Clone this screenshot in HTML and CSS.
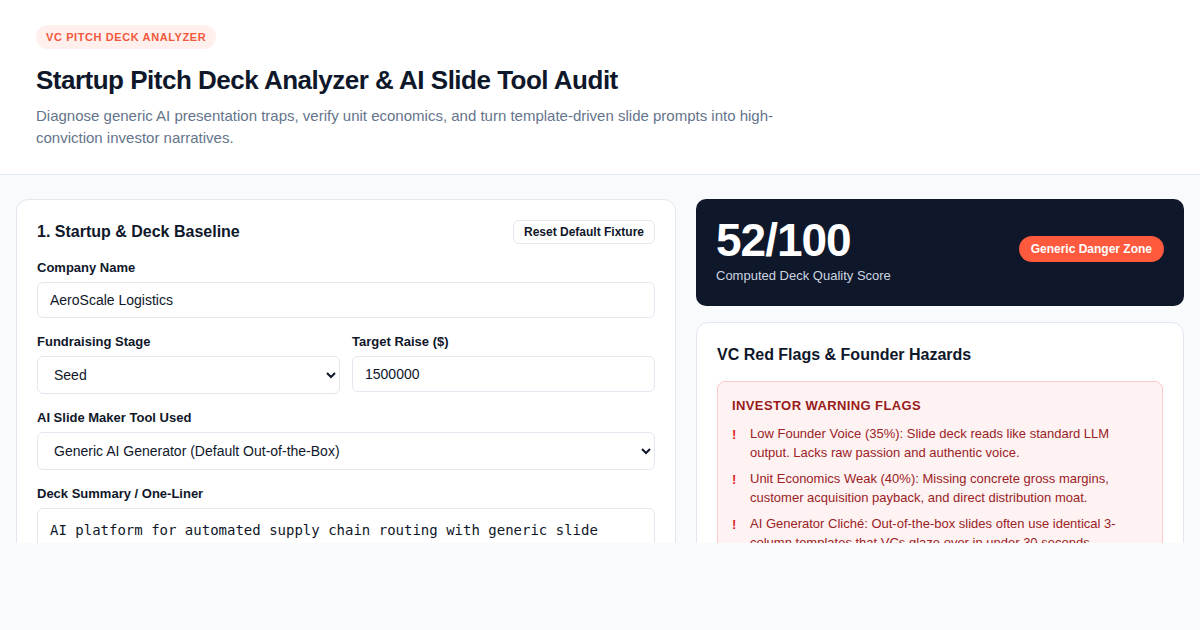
FILE: index.html
```html
<!DOCTYPE html>
<html lang="en">
<head>
    <meta charset="UTF-8">
    <meta name="viewport" content="width=device-width, initial-scale=1.0">
    <title>Startup Pitch Deck Analyzer</title>
    <link rel="stylesheet" href="styles.css">
</head>
<body>
    <!-- Page header -->
    <header class="page-header">
        <span class="eyebrow">VC Pitch Deck Analyzer</span>
        <h1>Startup Pitch Deck Analyzer &amp; AI Slide Tool Audit</h1>
        <p class="lead">Diagnose generic AI presentation traps, verify unit economics, and turn template-driven slide prompts into high-conviction investor narratives.</p>
    </header>

    <main class="workspace">
        <div class="workspace-grid">
            <!-- Baseline form -->
            <section class="card">
                <div class="card-head">
                    <h2>1. Startup &amp; Deck Baseline</h2>
                    <button class="btn-ghost" type="button">Reset Default Fixture</button>
                </div>

                <div class="field">
                    <label for="company">Company Name</label>
                    <input type="text" id="company" value="AeroScale Logistics">
                </div>

                <div class="field-row">
                    <div class="field">
                        <label for="stage">Fundraising Stage</label>
                        <select id="stage">
                            <option>Pre-Seed</option>
                            <option selected>Seed</option>
                            <option>Series A</option>
                            <option>Series B</option>
                        </select>
                    </div>
                    <div class="field">
                        <label for="raise">Target Raise ($)</label>
                        <input type="text" id="raise" value="1500000">
                    </div>
                </div>

                <div class="field">
                    <label for="tool">AI Slide Maker Tool Used</label>
                    <select id="tool">
                        <option selected>Generic AI Generator (Default Out-of-the-Box)</option>
                        <option>Custom Prompted Template</option>
                        <option>Designer-Built Deck</option>
                    </select>
                </div>

                <div class="field">
                    <label for="summary">Deck Summary / One-Liner</label>
                    <textarea id="summary" rows="4">AI platform for automated supply chain routing with generic slide templates and a standard market sizing slide.</textarea>
                </div>
            </section>

            <!-- Results column -->
            <div class="results">
                <div class="score-card">
                    <div>
                        <div class="score">52/100</div>
                        <div class="score-label">Computed Deck Quality Score</div>
                    </div>
                    <span class="pill-danger">Generic Danger Zone</span>
                </div>

                <section class="card">
                    <h2 class="card-title">VC Red Flags &amp; Founder Hazards</h2>
                    <div class="warning-box">
                        <h3>Investor Warning Flags</h3>
                        <ul class="flag-list">
                            <li><span class="bang">!</span><span>Low Founder Voice (35%): Slide deck reads like standard LLM output. Lacks raw passion and authentic voice.</span></li>
                            <li><span class="bang">!</span><span>Unit Economics Weak (40%): Missing concrete gross margins, customer acquisition payback, and direct distribution moat.</span></li>
                            <li><span class="bang">!</span><span>AI Generator Cliché: Out-of-the-box slides often use identical 3-column templates that VCs glaze over in under 30 seconds.</span></li>
                        </ul>
                    </div>
                </section>
            </div>
        </div>
    </main>
</body>
</html>
```

FILE: styles.css
```css
* {
    box-sizing: border-box;
}

body {
    margin: 0;
    font-family: "Liberation Sans", Arial, sans-serif;
    background-color: #f8fafc;
    color: #0f172a;
}

/* Header */
.page-header {
    background: #fff;
    border-bottom: 1px solid #e2e8f0;
    padding: 25px 36px 25px;
}

.eyebrow {
    display: inline-block;
    background: #fff0ed;
    color: #f2583c;
    font-size: 11px;
    font-weight: bold;
    letter-spacing: 0.6px;
    text-transform: uppercase;
    padding: 6px 10px;
    line-height: 12px;
    border-radius: 999px;
}

.page-header h1 {
    margin: 15px 0 9px;
    font-size: 26px;
    line-height: 32px;
    letter-spacing: -0.5px;
    color: #0f172a;
}

.lead {
    margin: 0;
    max-width: 760px;
    font-size: 15px;
    line-height: 22px;
    color: #64748b;
}

/* Main area */
.workspace {
    padding: 24px 16px 0;
}

.workspace-grid {
    display: grid;
    grid-template-columns: 660px 1fr;
    gap: 20px;
    height: 344px;
    overflow: hidden;
    align-items: start;
}

.card {
    background: #fff;
    border: 1px solid #e2e8f0;
    border-radius: 12px;
    padding: 20px;
}

.card-head {
    display: flex;
    justify-content: space-between;
    align-items: center;
    margin-bottom: 16px;
}

.card h2 {
    margin: 0;
    font-size: 16px;
    line-height: 24px;
    color: #0f172a;
}

.btn-ghost {
    font-family: inherit;
    font-size: 12px;
    font-weight: bold;
    color: #0f172a;
    background: #fff;
    border: 1px solid #e2e8f0;
    border-radius: 6px;
    padding: 0 10px;
    height: 24px;
    cursor: pointer;
}

/* Form fields */
.field {
    display: flex;
    flex-direction: column;
    margin-bottom: 16px;
}

.field label {
    font-size: 13px;
    font-weight: bold;
    line-height: 16px;
    margin-bottom: 6px;
    color: #0f172a;
}

.field input,
.field select,
.field textarea {
    font-family: inherit;
    font-size: 14px;
    color: #0f172a;
    background: #fff;
    border: 1px solid #e2e8f0;
    border-radius: 6px;
    padding: 0 12px;
    height: 36px;
    outline: none;
}

.field select {
    height: 38px;
    padding: 0 12px;
}

.field textarea {
    font-family: "DejaVu Sans Mono", monospace;
    height: auto;
    padding: 11px 12px;
    line-height: 20px;
    resize: vertical;
}

.field-row {
    display: grid;
    grid-template-columns: 1fr 1fr;
    gap: 12px;
}

/* Score */
.results {
    display: flex;
    flex-direction: column;
    gap: 16px;
}

.score-card {
    background: #0f172a;
    border-radius: 10px;
    padding: 15px 20px 23px;
    display: flex;
    justify-content: space-between;
    align-items: center;
}

.score {
    font-size: 46px;
    font-weight: bold;
    line-height: 52px;
    color: #fff;
    letter-spacing: -1px;
}

.score-label {
    font-size: 13px;
    line-height: 15px;
    color: #cbd5e1;
    margin-top: 2px;
}

.pill-danger {
    background: #ff5a3d;
    color: #fff;
    font-size: 12px;
    font-weight: bold;
    padding: 7px 12px;
    line-height: 12px;
    border-radius: 999px;
}

/* Red flags */
.card .card-title {
    margin-bottom: 14px;
}

.warning-box {
    background: #fef2f2;
    border: 1px solid #fecaca;
    border-radius: 8px;
    padding: 16px 14px;
}

.warning-box h3 {
    margin: 0 0 10px;
    font-size: 13px;
    line-height: 16px;
    letter-spacing: 0.4px;
    text-transform: uppercase;
    color: #991b1b;
}

.flag-list {
    list-style: none;
    margin: 0;
    padding: 0;
}

.flag-list li {
    display: flex;
    font-size: 13px;
    line-height: 19px;
    color: #9b2226;
    margin-bottom: 7px;
}

.bang {
    flex: 0 0 18px;
    color: #dc2626;
    font-weight: bold;
    margin-top: 1px;
}
```
